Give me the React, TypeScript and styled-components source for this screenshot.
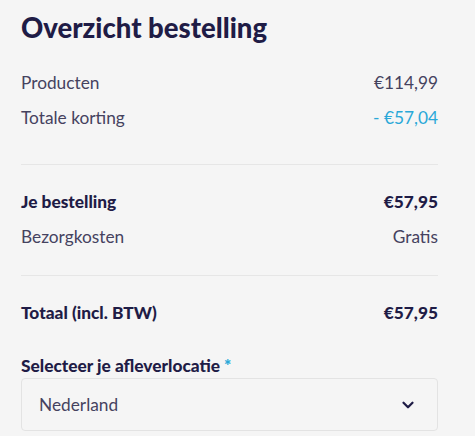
import styled, { createGlobalStyle } from "styled-components";

const GlobalStyle = createGlobalStyle`
  html, body {
    margin: 0;
    padding: 0;
    background: #f5f5f5;
  }
  body {
    font-family: Lato, "Noto Sans", sans-serif;
    color: #1f1c46;
  }
`;

const Panel = styled.section`
  padding: 12px 37px 0 21px;
  display: flex;
  flex-direction: column;
`;

const Title = styled.h2`
  margin: 0 0 27px;
  font-size: 27.5px;
  font-weight: 900;
  line-height: 32px;
  color: #1f1c46;
`;

const Group = styled.div<{ $space: number }>`
  display: flex;
  flex-direction: column;
  gap: 12px;
  padding-bottom: ${(p) => p.$space}px;
`;

const Divider = styled.hr`
  margin: 0 0 25px;
  border: 0;
  border-top: 1px solid #e6e6e6;
`;

const Row = styled.div<{ $bold?: boolean }>`
  display: flex;
  justify-content: space-between;
  align-items: center;
  font-size: 17.3px;
  line-height: 23px;
  font-weight: ${(p) => (p.$bold ? 900 : 400)};
  color: ${(p) => (p.$bold ? "#1f1c46" : "#45425f")};
`;

const Discount = styled.span`
  color: #2aa8d8;
`;

const Label = styled.label`
  display: block;
  margin-top: 11px;
  margin-bottom: 1px;
  font-size: 17.3px;
  line-height: 22px;
  font-weight: 900;
  color: #1f1c46;
`;

const Star = styled.span`
  color: #2aa8d8;
  margin-left: 4px;
`;

const Select = styled.div`
  height: 53px;
  box-sizing: border-box;
  border: 1px solid #e3e3e3;
  border-radius: 4px;
  display: flex;
  align-items: center;
  justify-content: space-between;
  padding: 0 20px 0 17px;
  font-size: 17.3px;
  color: #45425f;

  svg {
    display: block;
  }
`;

export default function App() {
  return (
    <>
      <GlobalStyle />
      <Panel>
        <Title>Overzicht bestelling</Title>
        <Group $space={35}>
          <Row>
            <span>Producten</span>
            <span>€114,99</span>
          </Row>
          <Row>
            <span>Totale korting</span>
            <Discount>- €57,04</Discount>
          </Row>
        </Group>
        <Divider />
        <Group $space={27}>
          <Row $bold>
            <span>Je bestelling</span>
            <span>€57,95</span>
          </Row>
          <Row>
            <span>Bezorgkosten</span>
            <span>Gratis</span>
          </Row>
        </Group>
        <Divider />
        <Group $space={20}>
          <Row $bold>
            <span>Totaal (incl. BTW)</span>
            <span>€57,95</span>
          </Row>
        </Group>
        <Label>
          Selecteer je afleverlocatie<Star>*</Star>
        </Label>
        <Select>
          <span>Nederland</span>
          <svg width="18" height="18" viewBox="0 0 24 24" fill="none" stroke="#1f1c46" strokeWidth="3" strokeLinecap="round" strokeLinejoin="round">
            <path d="M6 9l6 6 6-6" />
          </svg>
        </Select>
      </Panel>
    </>
  );
}
